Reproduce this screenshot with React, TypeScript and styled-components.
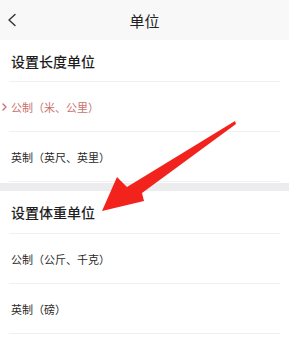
import styled, { createGlobalStyle } from "styled-components";

const GlobalStyle = createGlobalStyle`
  html, body {
    margin: 0;
    padding: 0;
    background: #ffffff;
  }
  body {
    font-family: "Noto Sans CJK SC", "Noto Sans", sans-serif;
  }
`;

const Page = styled.div`
  width: 289px;
  height: 339px;
  position: relative;
  overflow: hidden;
  background: #ffffff;
`;

const TopBar = styled.div`
  height: 40px;
  background: #f8f8f8;
  display: grid;
  grid-template-columns: 40px 1fr 40px;
  align-items: center;
`;

const Back = styled.div`
  display: flex;
  align-items: center;
  padding-left: 7px;
`;

const Title = styled.h1`
  margin: 0;
  text-align: center;
  font-size: 15px;
  font-weight: 400;
  color: #222;
`;

const Section = styled.section`
  padding: 0 9px;
`;

const Heading = styled.div<{ $h: number }>`
  height: ${(p) => p.$h}px;
  display: flex;
  align-items: center;
  padding: 0 2px;
  font-size: 14px;
  font-weight: 500;
  color: #1e1e1e;
  border-bottom: 1px solid #f0f0f0;
  box-sizing: border-box;
`;

const Row = styled.div<{ $active?: boolean }>`
  height: 50px;
  display: flex;
  align-items: center;
  padding: 0 2px;
  font-size: 11px;
  color: ${(p) => (p.$active ? "#c8716c" : "#2a2a2a")};
  border-bottom: 1px solid #f0f0f0;
  box-sizing: border-box;
  position: relative;
`;

const Tick = styled.svg`
  position: absolute;
  left: -7px;
  top: 50%;
  transform: translateY(-50%);
`;

const Gap = styled.div`
  height: 8px;
  background: #ececee;
  margin-top: 1px;
`;

const Arrow = styled.svg`
  position: absolute;
  left: 0;
  top: 0;
  pointer-events: none;
`;

export default function App() {
  return (
    <Page>
      <GlobalStyle />
      <TopBar>
        <Back>
          <svg width="10" height="14" viewBox="0 0 10 14">
            <path d="M8 1.5 L2 7 L8 12.5" fill="none" stroke="#333" strokeWidth="1.4" strokeLinecap="round" strokeLinejoin="round" />
          </svg>
        </Back>
        <Title>单位</Title>
        <div />
      </TopBar>

      <Section>
        <Heading $h={42}>设置长度单位</Heading>
        <Row $active>
          <Tick width="5" height="8" viewBox="0 0 5 8">
            <path d="M1 1 L4 4 L1 7" fill="none" stroke="#c8716c" strokeWidth="1.4" strokeLinecap="round" strokeLinejoin="round" />
          </Tick>
          公制（米、公里）
        </Row>
        <Row>英制（英尺、英里）</Row>
      </Section>
      <Gap />
      <Section>
        <Heading $h={43}>设置体重单位</Heading>
        <Row>公制（公斤、千克）</Row>
        <Row>英制（磅）</Row>
      </Section>

      <Arrow width="289" height="339" viewBox="0 0 289 339">
        <path d="M235 121 L236 124 L142 193 L144 201 L102 211 L117 177 L127 187 Z" fill="#f2231d" />
      </Arrow>
    </Page>
  );
}
